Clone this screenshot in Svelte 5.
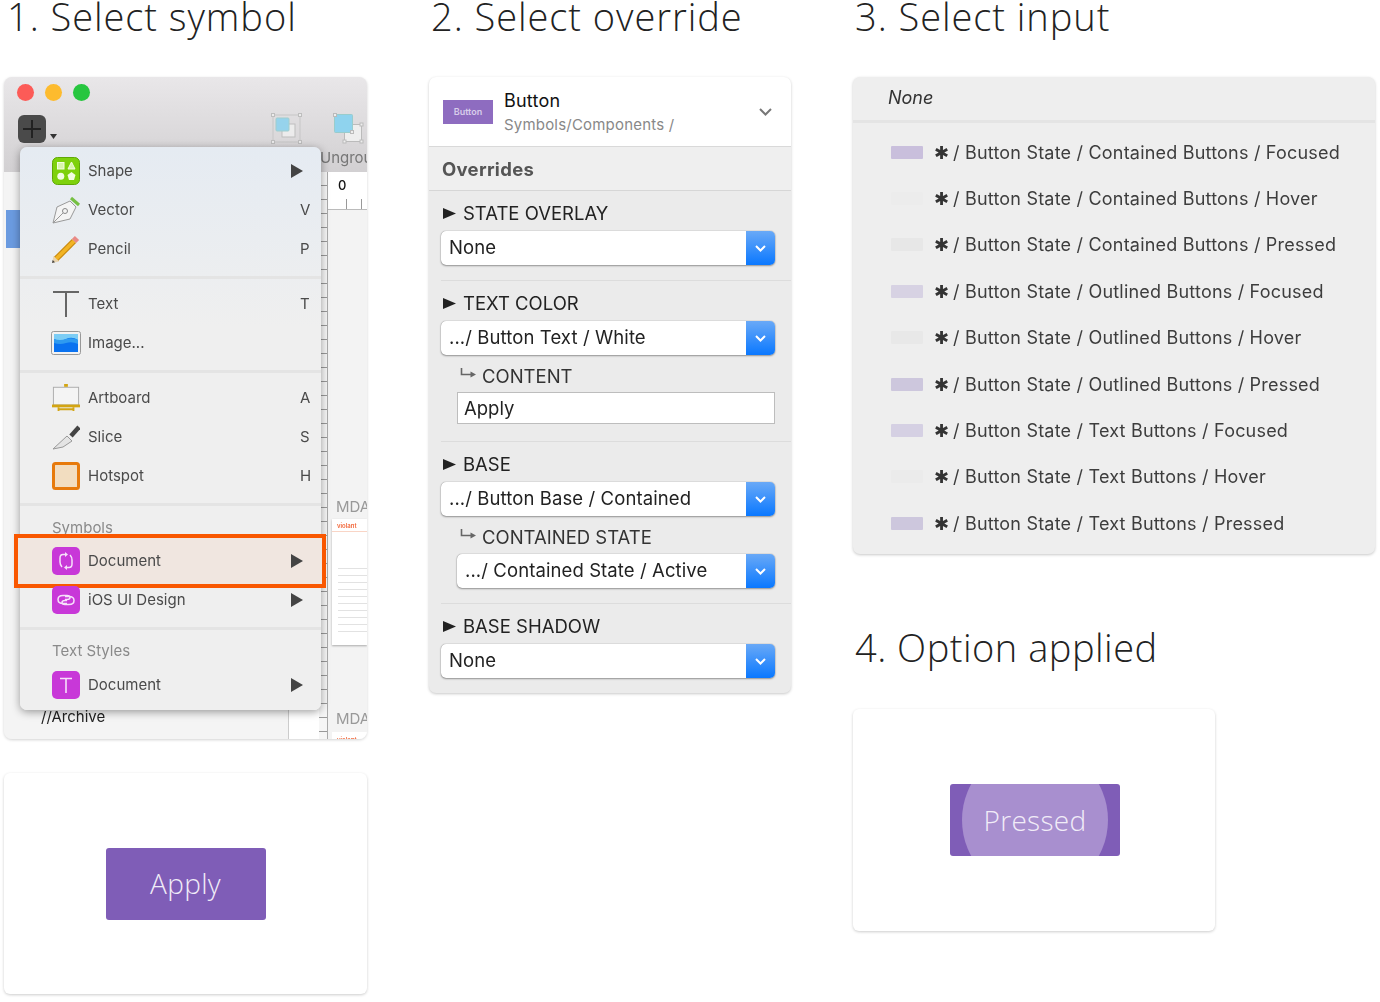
<script lang="ts">
	const stateRows = [
		{ name: 'Contained Buttons / Focused', swatch: '#c9bfdc' },
		{ name: 'Contained Buttons / Hover', swatch: '#ececec' },
		{ name: 'Contained Buttons / Pressed', swatch: '#e7e7e7' },
		{ name: 'Outlined Buttons / Focused', swatch: '#d7d2e3' },
		{ name: 'Outlined Buttons / Hover', swatch: '#e8e8e8' },
		{ name: 'Outlined Buttons / Pressed', swatch: '#cdc7dd' },
		{ name: 'Text Buttons / Focused', swatch: '#d5d0e3' },
		{ name: 'Text Buttons / Hover', swatch: '#ebebeb' },
		{ name: 'Text Buttons / Pressed', swatch: '#cdc7dd' }
	];
	const thumbRows = [0, 1, 2, 3, 4, 5, 6, 7, 8, 9];
</script>

{#snippet tri()}
	<svg class="tri" width="13" height="11" viewBox="0 0 13 11"><polygon points="0,0 13,5.5 0,11" fill="#222" /></svg>
{/snippet}

{#snippet subhook()}
	<svg class="hook" width="17" height="12" viewBox="0 0 17 12"><path d="M1.5 0V6.5H11" fill="none" stroke="#666" stroke-width="1.6" /><polygon points="10.5,3.5 16,6.5 10.5,9.5" fill="#666" /></svg>
{/snippet}

{#snippet select(text: string, sub = false)}
	<div class="select" class:sub>
		<span class="value">{text}</span>
		<span class="stepper">
			<svg width="11" height="7" viewBox="0 0 11 7"><path d="M1 1l4.500 4.500L10 1" fill="none" stroke="#fff" stroke-width="2" /></svg>
		</span>
	</div>
{/snippet}

{#snippet submenu()}
	<svg class="more" width="12" height="14" viewBox="0 0 12 14"><polygon points="0,0 12,7 0,14" fill="#444" /></svg>
{/snippet}

<main class="page">
	<section class="col">
		<h2>1. Select symbol</h2>
		<div class="window">
			<div class="titlebar">
				<div class="lights">
					<span style="background:#fc5b57"></span>
					<span style="background:#fdbb2e"></span>
					<span style="background:#27c63f"></span>
				</div>
				<div class="tools">
					<span class="plus">
						<svg width="28" height="28" viewBox="0 0 28 28"><path d="M14 5V23M5 14H23" stroke="#222" stroke-width="2" /></svg>
					</span>
					<svg class="caret" width="7" height="5" viewBox="0 0 7 5"><polygon points="0,0 7,0 3.500,5" fill="#333" /></svg>
					<svg class="group-ico" width="31" height="31" viewBox="0 0 31 31">
						<rect x="2" y="2" width="27" height="27" fill="none" stroke="#c4c4c4" />
						<rect x="11" y="11" width="13" height="13" fill="#eee" stroke="#bbb" />
						<rect x="5" y="5" width="13" height="13" rx="1" fill="#8fd3ee" stroke="#9cc" />
						<g fill="#eee" stroke="#bbb">
							<rect x="0.500" y="0.500" width="3" height="3" />
							<rect x="27.500" y="0.500" width="3" height="3" />
							<rect x="0.500" y="27.500" width="3" height="3" />
							<rect x="27.500" y="27.500" width="3" height="3" />
						</g>
					</svg>
					<svg class="ungroup-ico" width="31" height="31" viewBox="0 0 31 31">
						<rect x="11.500" y="11.500" width="17" height="17" fill="#eee" stroke="#bbb" />
						<rect x="1.500" y="1.500" width="18" height="18" rx="1" fill="#8fd3ee" stroke="#9cc" />
						<g fill="#eee" stroke="#bbb">
							<rect x="0.500" y="0.500" width="3" height="3" />
							<rect x="17.500" y="17.500" width="3" height="3" />
							<rect x="27" y="10" width="3" height="3" />
							<rect x="27" y="27" width="3" height="3" />
							<rect x="10" y="27" width="3" height="3" />
						</g>
					</svg>
				</div>
				<span class="ungroup">Ungroup</span>
			</div>
			<div class="docarea">
				<div class="sidebar">
					<div class="sel-row"></div>
					<div class="archive">//Archive</div>
				</div>
				<div class="gutter"></div>
				<div class="vruler"></div>
				<div class="canvas">
					<div class="hruler"><b>0</b></div>
					<span class="mda">MDA</span>
					<div class="thumb">
						<div class="brand">violant</div>
						{#each thumbRows as n (n)}
							<div class="thumb-line"></div>
						{/each}
					</div>
					<span class="mda second">MDA</span>
					<div class="thumb-foot"><span class="brand">violant</span></div>
				</div>
			</div>

			<div class="menu">
				<div class="group first">
					<div class="item">
						<svg class="ico" width="28" height="28" viewBox="0 0 28 28">
							<rect x="0.500" y="0.500" width="27" height="27" rx="5" fill="#7ed10c" stroke="#5fa806" />
							<rect x="5.500" y="5.500" width="6.500" height="6.500" fill="#d8f5ac" stroke="#f2fde2" />
							<polygon points="19.500,5 23,12 16,12" fill="#d8f5ac" stroke="#f2fde2" />
							<circle cx="8.800" cy="19.200" r="3.500" fill="#f2fde2" />
							<polygon points="19.500,15 23.500,18 22,23 17,23 15.500,18" fill="#f2fde2" />
						</svg>
						<span class="label">Shape</span>{@render submenu()}
					</div>
					<div class="item">
						<svg class="ico" width="28" height="28" viewBox="0 0 28 28">
							<polygon points="1,27 5,11 18,5 24,11 18,23" fill="#f4f4f4" stroke="#999" />
							<path d="M19 2L27 9" stroke="#76c043" stroke-width="3" />
							<circle cx="13" cy="15" r="2.500" fill="none" stroke="#888" />
							<path d="M1 27L11 17" stroke="#999" />
						</svg>
						<span class="label">Vector</span><span class="key">V</span>
					</div>
					<div class="item">
						<svg class="ico" width="28" height="28" viewBox="0 0 28 28">
							<path d="M4 24L22 6" stroke="#c98a10" stroke-width="6" />
							<path d="M4 24L22 6" stroke="#f2b424" stroke-width="3.500" />
							<path d="M22 6L25 3" stroke="#e98a86" stroke-width="6" />
							<polygon points="0,28 1.500,21 7,26.500" fill="#e8d3ae" />
							<polygon points="0,28 0.700,25 3,27.300" fill="#444" />
						</svg>
						<span class="label">Pencil</span><span class="key">P</span>
					</div>
				</div>
				<div class="group">
					<div class="item">
						<svg class="ico" width="28" height="28" viewBox="0 0 28 28"><path d="M1 2H27M14 2V27" stroke="#666" stroke-width="2" fill="none" /></svg>
						<span class="label">Text</span><span class="key">T</span>
					</div>
					<div class="item">
						<svg class="ico wide" width="30" height="24" viewBox="0 0 30 24">
							<rect x="0.500" y="0.500" width="29" height="23" rx="2" fill="#f2f2f2" stroke="#999" />
							<rect x="3" y="3" width="24" height="18" fill="#0a72f0" />
							<path d="M3 3H27V9Q21 5 15 8T3 8Z" fill="#7ccdf5" />
							<path d="M3 8Q9 10 15 8T27 9V13Q21 10 15 12T3 12Z" fill="#2f9bf0" />
						</svg>
						<span class="label">Image...</span>
					</div>
				</div>
				<div class="group">
					<div class="item">
						<svg class="ico" width="30" height="30" viewBox="0 0 30 30">
							<rect x="1.500" y="3.500" width="27" height="19" fill="#f4f4f4" stroke="#aaa" />
							<rect x="0" y="22" width="30" height="3" fill="#d3a513" />
							<rect x="13" y="0" width="4" height="3" fill="#d3a513" />
							<path d="M7 25V29M23 25V29M7 27H23" stroke="#d3a513" stroke-width="2" />
						</svg>
						<span class="label">Artboard</span><span class="key">A</span>
					</div>
					<div class="item">
						<svg class="ico" width="28" height="28" viewBox="0 0 28 28">
							<polygon points="1,26 15,13 20,18 11,24" fill="#e4e4e4" stroke="#999" />
							<path d="M19 13L27 4" stroke="#444" stroke-width="4.500" />
						</svg>
						<span class="label">Slice</span><span class="key">S</span>
					</div>
					<div class="item">
						<svg class="ico" width="28" height="28" viewBox="0 0 28 28">
							<rect x="1.500" y="1.500" width="25" height="25" rx="2" fill="#f2ddc0" stroke="#e77a0c" stroke-width="3" />
						</svg>
						<span class="label">Hotspot</span><span class="key">H</span>
					</div>
				</div>
				<div class="group">
					<div class="group-title symbols">Symbols</div>
					<div class="item picked">
						<svg class="ico" width="28" height="28" viewBox="0 0 28 28">
							<rect width="28" height="28" rx="5" fill="#c838d8" />
							<path d="M14 7.500H11Q8 7.500 8 11V15Q8 18 10 20M14 20.500H17Q20 20.500 20 17V13Q20 10 18 8" fill="none" stroke="#f6e0fa" stroke-width="1.500" />
							<polygon points="13,5 13,10 16,7.500" fill="#f6e0fa" />
							<polygon points="15,18 15,23 12,20.500" fill="#f6e0fa" />
						</svg>
						<span class="label">Document</span>{@render submenu()}
					</div>
					<div class="item">
						<svg class="ico" width="28" height="28" viewBox="0 0 28 28">
							<rect width="28" height="28" rx="5" fill="#c838d8" />
							<path d="M15 17.500H11Q6 17.500 6 13.500T11 9.500H15Q18 9.500 18 11.500T15 13.500H13" fill="none" stroke="#f6e0fa" stroke-width="1.500" />
							<path d="M13 10.500H17Q22 10.500 22 14.500T17 18.500H13Q10 18.500 10 16.500T13 14.500H15" fill="none" stroke="#f6e0fa" stroke-width="1.500" />
						</svg>
						<span class="label">iOS UI Design</span>{@render submenu()}
					</div>
				</div>
				<div class="group">
					<div class="group-title">Text Styles</div>
					<div class="item">
						<svg class="ico" width="28" height="28" viewBox="0 0 28 28">
							<rect width="28" height="28" rx="5" fill="#c838d8" />
							<path d="M8 7.500H20M14 7.500V22" stroke="#f6e0fa" stroke-width="1.600" fill="none" />
						</svg>
						<span class="label">Document</span>{@render submenu()}
					</div>
				</div>
			</div>
		</div>
		<div class="demo apply-card">
			<div class="btn apply">Apply</div>
		</div>
	</section>

	<section class="col second">
		<h2>2. Select override</h2>
		<div class="panel overrides">
			<header class="symbol-head">
				<div class="thumb-btn">Button</div>
				<div class="symbol-text">
					<div class="symbol-name">Button</div>
					<div class="symbol-path">Symbols/Components /</div>
				</div>
				<svg width="13" height="8" viewBox="0 0 13 8"><path d="M1 1l5.500 5.500L12 1" fill="none" stroke="#777" stroke-width="2" /></svg>
			</header>
			<div class="ov-title">Overrides</div>
			<div class="ov-section">
				<div class="ov-label">{@render tri()}STATE OVERLAY</div>
				{@render select('None')}
			</div>
			<div class="ov-section tall">
				<div class="ov-label">{@render tri()}TEXT COLOR</div>
				{@render select('.../ Button Text / White')}
				<div class="ov-label nested">{@render subhook()}CONTENT</div>
				<div class="text-input">Apply</div>
			</div>
			<div class="ov-section">
				<div class="ov-label">{@render tri()}BASE</div>
				{@render select('.../ Button Base / Contained')}
				<div class="ov-label nested roomy">{@render subhook()}CONTAINED STATE</div>
				{@render select('.../ Contained State / Active', true)}
			</div>
			<div class="ov-section">
				<div class="ov-label">{@render tri()}BASE SHADOW</div>
				{@render select('None')}
			</div>
		</div>
	</section>

	<section class="col third">
		<h2>3. Select input</h2>
		<div class="panel inputs">
			<div class="none-row">None</div>
			<ul class="state-list">
				{#each stateRows as row (row.name)}
					<li>
						<span class="swatch" style="background:{row.swatch}"></span>
						<span class="star">✱</span>
						<span>/ Button State / {row.name}</span>
					</li>
				{/each}
			</ul>
		</div>
		<h2 class="second-head">4. Option applied</h2>
		<div class="demo pressed-card">
			<div class="btn pressed">
				<span class="ripple"></span>
				<span class="btn-text">Pressed</span>
			</div>
		</div>
	</section>
</main>

<style>
	:global(body) {
		background: #fff;
		font-family: 'Inter', 'Liberation Sans', sans-serif;
	}

	.page {
		display: flex;
		align-items: flex-start;
		width: 1380px;
		height: 1002px;
		overflow: hidden;
		padding-left: 4px;
		box-sizing: border-box;
	}

	.col {
		width: 363px;
		margin-right: 62px;
		flex: none;
	}

	.col.second {
		margin-right: 61px;
	}

	.third {
		width: 522px;
		margin-right: 0;
	}

	h2 {
		margin: 0;
		height: 77px;
		padding-left: 2px;
		font-family: 'Open Sans', sans-serif;
		font-weight: 300;
		font-size: 38px;
		letter-spacing: 0.95px;
		line-height: 33px;
		color: #222;
		white-space: nowrap;
	}

	.col:first-child h2 {
		padding-left: 3px;
	}

	/* sketch window */
	.window {
		position: relative;
		height: 662px;
		border-radius: 8px;
		overflow: hidden;
		box-shadow: 0 1px 3px rgba(0, 0, 0, 0.18);
		background: #f4f4f4;
		filter: blur(0.35px);
	}

	.titlebar {
		position: relative;
		height: 95px;
		box-sizing: border-box;
		padding: 7px 13px 0;
		background: linear-gradient(#e9e7e9, #d2d0d2);
	}

	.lights {
		display: flex;
		gap: 11px;
	}

	.lights span {
		width: 17px;
		height: 17px;
		border-radius: 50%;
	}

	.tools {
		display: flex;
		align-items: flex-start;
		margin-top: 14px;
		margin-left: 1px;
	}

	.tools > * {
		flex: none;
	}

	.plus {
		display: block;
		width: 28px;
		height: 28px;
		border-radius: 6px;
		background: #4a4a4a;
	}

	.caret {
		margin: 19px 0 0 4px;
	}

	.group-ico {
		margin-left: 214px;
		margin-top: -2px;
		opacity: 0.9;
	}

	.ungroup-ico {
		margin-left: 31px;
		margin-top: -2px;
	}

	.ungroup {
		position: absolute;
		left: 316px;
		top: 71px;
		font-size: 15px;
		color: #777;
	}

	.docarea {
		display: flex;
		height: 567px;
	}

	.sidebar {
		position: relative;
		width: 285px;
		flex: none;
		padding-top: 38px;
		box-sizing: border-box;
		background: #f4f4f4;
		border-right: 1px solid #ccc;
	}

	.gutter {
		width: 30px;
		flex: none;
		background: #fff;
	}

	.sel-row {
		width: 16px;
		height: 38px;
		margin-left: 2px;
		background: #6b9be0;
	}

	.archive {
		position: absolute;
		left: 37px;
		bottom: 13px;
		font-size: 15px;
		color: #222;
	}

	.vruler {
		width: 8px;
		flex: none;
		background: repeating-linear-gradient(#f6f6f6 0 13px, #999 13px 14px);
		border-right: 1px solid #aaa;
	}

	.canvas {
		flex: 1;
		min-width: 0;
		overflow: hidden;
		background: #f3f3f3;
	}

	.hruler {
		height: 38px;
		background-color: #fff;
		background-image: repeating-linear-gradient(90deg, transparent 0 14px, #999 14px 15px);
		background-position: 4px bottom;
		background-size: 100% 10px;
		background-repeat: no-repeat;
		border-bottom: 1px solid #bbb;
		font-size: 13px;
		padding: 5px 0 0 10px;
		box-sizing: border-box;
		color: #111;
	}

	.hruler b {
		font-weight: 500;
	}

	.mda {
		display: block;
		margin-top: 288px;
		margin-left: 8px;
		font-size: 15px;
		color: #999;
		line-height: 18px;
		white-space: nowrap;
	}

	.thumb {
		margin: 3px 0 0 4px;
		height: 126px;
		background: #fff;
		box-shadow: 0 1px 2px rgba(0, 0, 0, 0.3);
		padding-top: 3px;
		box-sizing: border-box;
	}

	.brand {
		padding-left: 5px;
		font-size: 6px;
		line-height: 8px;
		height: 9px;
		font-weight: 600;
		color: #f2673a;
		border-bottom: 1px solid #f9d5c6;
		margin-bottom: 30px;
	}

	.thumb-foot {
		margin: 4px 0 0 4px;
		height: 12px;
		background: #fff;
		line-height: 8px;
	}

	.thumb-foot .brand {
		border: 0;
	}

	.thumb-line {
		height: 6px;
		margin: 0 0 0 6px;
		border-bottom: 1px solid #e2e2e2;
	}

	.mda.second {
		margin-top: 65px;
	}

	/* insert menu */
	.menu {
		position: absolute;
		left: 16px;
		top: 70px;
		width: 301px;
		height: 563px;
		border-radius: 7px;
		background: linear-gradient(#e5ebf2, #efefef 32%);
		box-shadow: 0 2px 8px rgba(0, 0, 0, 0.38);
		color: #4a4a4a;
		font-size: 15px;
	}

	.group {
		border-top: 3px solid #e4e4e4;
		padding: 5px 0 8px;
	}

	.group.first {
		border-top: 0;
		padding-top: 4px;
	}

	.group-title {
		height: 30px;
		padding: 7px 0 0 32px;
		box-sizing: border-box;
		color: #8a8a8a;
		line-height: 18px;
	}

	.group-title.symbols {
		height: 27px;
		padding-top: 5px;
		margin-top: 3px;
	}

	.item {
		position: relative;
		display: flex;
		align-items: center;
		height: 39px;
		padding-left: 32px;
	}

	.ico {
		width: 28px;
		flex: none;
		margin-right: 8px;
		position: relative;
		z-index: 1;
	}

	.ico.wide {
		margin-left: -1px;
		margin-right: 7px;
		width: 30px;
	}

	.label {
		flex: 1;
		position: relative;
		z-index: 1;
	}

	.key {
		position: relative;
		z-index: 1;
		width: 21px;
		flex: none;
	}

	.more {
		margin-right: 18px;
		position: relative;
		z-index: 1;
	}

	.picked::after {
		content: '';
		position: absolute;
		left: -6px;
		right: -5px;
		top: -7px;
		bottom: -8px;
		border: 4px solid #f95700;
		background: #f0e6e0;
	}

	/* cards */
	.demo {
		display: flex;
		align-items: center;
		justify-content: center;
		background: #fff;
		border-radius: 6px;
		box-shadow: 0 1px 3px rgba(0, 0, 0, 0.2);
		box-sizing: border-box;
	}

	.apply-card {
		margin-top: 34px;
		height: 221px;
	}

	.pressed-card {
		width: 362px;
		height: 222px;
		padding-left: 2px;
	}

	.btn {
		position: relative;
		overflow: hidden;
		display: flex;
		align-items: center;
		justify-content: center;
		border-radius: 3px;
		background: #7f5db7;
		color: #f1ecf8;
		font-family: 'Open Sans', sans-serif;
		font-size: 28px;
		font-weight: 300;
		letter-spacing: 0.3px;
	}

	.apply {
		width: 160px;
		height: 72px;
		padding-bottom: 2px;
		box-sizing: border-box;
	}

	.pressed {
		width: 170px;
		height: 72px;
	}

	.ripple {
		position: absolute;
		left: 12px;
		top: -38px;
		width: 146px;
		height: 148px;
		border-radius: 50%;
		background: #a88fcf;
	}

	.btn-text {
		position: relative;
	}

	/* panels */
	.panel {
		border-radius: 7px;
		overflow: hidden;
		box-shadow: 0 1px 3px rgba(0, 0, 0, 0.22);
		color: #333;
		filter: blur(0.3px);
	}

	.overrides {
		width: 362px;
		height: 616px;
		background: #ebebeb;
	}

	.symbol-head {
		display: flex;
		align-items: center;
		height: 70px;
		padding: 0 19px 0 14px;
		background: #fff;
		border-bottom: 1px solid #d9d9d9;
		box-sizing: border-box;
	}

	.thumb-btn {
		width: 50px;
		height: 24px;
		background: #8e6cc0;
		color: #d8cdea;
		font-size: 9px;
		font-weight: 600;
		line-height: 24px;
		text-align: center;
		flex: none;
	}

	.symbol-text {
		flex: 1;
		margin-left: 11px;
	}

	.symbol-name {
		font-size: 18px;
		letter-spacing: 0.2px;
		line-height: 22px;
		color: #111;
	}

	.symbol-path {
		margin-top: 4px;
		font-size: 15px;
		letter-spacing: 0.2px;
		line-height: 18px;
		color: #888;
	}

	.ov-title {
		height: 44px;
		line-height: 44px;
		padding-left: 13px;
		box-sizing: border-box;
		background: #efefef;
		border-bottom: 1px solid #d6d6d6;
		font-weight: 700;
		font-size: 18.500px;
		letter-spacing: 0.3px;
		color: #555;
	}

	.ov-section {
		margin-left: 12px;
		padding: 13px 16px 15px 0;
		border-top: 1px solid #dcdcdc;
	}

	.ov-section:nth-child(3) {
		border-top: 0;
	}

	.ov-section.tall {
		padding-bottom: 17px;
	}

	.ov-label {
		display: flex;
		align-items: center;
		height: 18px;
		margin-bottom: 9px;
		font-size: 18.500px;
		color: #222;
		white-space: nowrap;
	}

	.ov-label.nested {
		margin: 12px 0 7px 19px;
		color: #333;
	}

	.ov-label.roomy {
		margin-bottom: 8px;
	}

	.tri {
		margin: 0 7px 0 2px;
	}

	.hook {
		margin-right: 5px;
		margin-top: -4px;
	}

	.select {
		display: flex;
		height: 34px;
		border-radius: 5px;
		overflow: hidden;
		background: #fff;
		box-shadow: 0 0 1px rgba(0, 0, 0, 0.5), 0 1px 2px rgba(0, 0, 0, 0.35);
	}

	.select.sub {
		margin-left: 16px;
	}

	.value {
		flex: 1;
		padding-left: 8px;
		font-size: 18.500px;
		letter-spacing: 0.1px;
		line-height: 33px;
		color: #222;
		white-space: nowrap;
	}

	.stepper {
		display: flex;
		align-items: center;
		justify-content: center;
		width: 29px;
		flex: none;
		background: linear-gradient(#69a9f7, #0a78ff);
	}

	.text-input {
		margin-left: 16px;
		height: 32px;
		line-height: 30px;
		padding-left: 6px;
		box-sizing: border-box;
		background: #fff;
		border: 1px solid #bdbdbd;
		font-size: 18.500px;
		color: #222;
	}

	.inputs {
		height: 477px;
		background: #eeeeee;
	}

	.none-row {
		height: 46px;
		padding: 0 0 3px 35px;
		line-height: 41px;
		box-sizing: border-box;
		border-bottom: 3px solid #e4e4e4;
		font-style: italic;
		font-size: 18px;
		color: #333;
	}

	.state-list {
		list-style: none;
		margin: 0;
		padding: 6px 0 0 38px;
	}

	.state-list li {
		display: flex;
		align-items: center;
		height: 46.4px;
		font-size: 18px;
		letter-spacing: 0.2px;
		color: #3d3d3d;
		white-space: nowrap;
	}

	.swatch {
		width: 32px;
		height: 13px;
		border-radius: 1px;
		margin-right: 11px;
	}

	.star {
		margin-right: 5px;
		font-size: 18px;
		width: 14px;
		color: #333;
	}

	.second-head {
		margin-top: 75px;
		height: 80px;
		line-height: 36px;
		letter-spacing: 0.5px;
	}
</style>
